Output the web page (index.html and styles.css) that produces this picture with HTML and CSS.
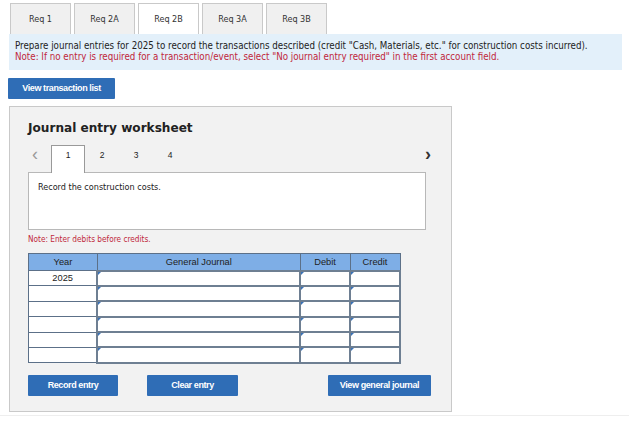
FILE: index.html
```html
<!DOCTYPE html>
<html>
<head>
<meta charset="utf-8">
<link rel="stylesheet" href="styles.css">
</head>
<body>
<div class="tabs">
  <div class="tab">Req 1</div>
  <div class="tab">Req 2A</div>
  <div class="tab active">Req 2B</div>
  <div class="tab">Req 3A</div>
  <div class="tab">Req 3B</div>
</div>
<div class="info">
  <p>Prepare journal entries for 2025 to record the transactions described (credit "Cash, Materials, etc." for construction costs incurred).</p>
  <p class="red">Note: If no entry is required for a transaction/event, select "No journal entry required" in the first account field.</p>
</div>
<div class="btnrow"><span class="btn btn-list">View transaction list</span></div>
<div class="panel">
  <h2 class="title">Journal entry worksheet</h2>
  <div class="pager">
    <span class="arrow left">&lsaquo;</span>
    <span class="page current">1</span>
    <span class="page">2</span>
    <span class="page">3</span>
    <span class="page">4</span>
    <span class="spacer"></span>
    <span class="arrow right">&rsaquo;</span>
  </div>
  <div class="desc">Record the construction costs.</div>
  <div class="note">Note: Enter debits before credits.</div>
  <table class="journal">
    <thead>
      <tr><th class="c-year">Year</th><th class="c-gj">General Journal</th><th class="c-dr">Debit</th><th class="c-cr">Credit</th></tr>
    </thead>
    <tbody>
      <tr><td class="year">2025</td><td class="in"><i></i></td><td class="in"><i></i></td><td class="in"><i></i></td></tr>
      <tr><td class="year"></td><td class="in"><i></i></td><td class="in"><i></i></td><td class="in"><i></i></td></tr>
      <tr><td class="year"></td><td class="in"><i></i></td><td class="in"><i></i></td><td class="in"><i></i></td></tr>
      <tr><td class="year"></td><td class="in"><i></i></td><td class="in"><i></i></td><td class="in"><i></i></td></tr>
      <tr><td class="year"></td><td class="in"><i></i></td><td class="in"><i></i></td><td class="in"><i></i></td></tr>
      <tr><td class="year"></td><td class="in"><i></i></td><td class="in"><i></i></td><td class="in"><i></i></td></tr>
    </tbody>
  </table>
  <div class="actions">
    <span class="btn btn-record">Record entry</span>
    <span class="btn btn-clear">Clear entry</span>
    <span class="btn btn-view">View general journal</span>
  </div>
</div>
<div class="footer-line"></div>
</body>
</html>
```
FILE: styles.css
```css
* { box-sizing: border-box; }
html, body { margin: 0; padding: 0; background: #fff; }
body {
  width: 629px;
  height: 425px;
  overflow: hidden;
  font-family: "DejaVu Sans Condensed", "DejaVu Sans", sans-serif;
  color: #222;
}
.tabs {
  display: flex;
  gap: 3px;
  padding: 3px 0 0 10px;
  height: 34px;
}
.tab {
  width: 61px;
  height: 31px;
  border: 1px solid #c9c9c9;
  border-bottom: none;
  background: #f0f0f0;
  display: flex;
  align-items: center;
  justify-content: center;
  font-size: 9px;
  color: #333;
}
.tab.active { background: #fff; }
.info {
  margin: 0 7px 0 9px;
  background: #e3f0fa;
  padding: 6px 6px 6px 6px;
  height: 36px;
  font-size: 9.7px;
  line-height: 11px;
}
.info p { margin: 0; color: #222; white-space: nowrap; }
.info p.red { color: #c0273a; }
.btnrow { padding: 6px 0 0 8px; height: 29px; }
.btn {
  display: inline-flex;
  align-items: center;
  justify-content: center;
  background: #2f6db6;
  color: #fff;
  font-family: "Liberation Sans", Arial, sans-serif;
  font-weight: bold;
  font-size: 9px;
  letter-spacing: -0.4px;
  border-radius: 1px;
}
.btn-list { width: 107px; height: 21px; }
.panel {
  margin: 7px 0 0 9px;
  width: 443px;
  height: 306px;
  background: #f2f2f2;
  border: 1px solid #c9c9c9;
  padding: 13px 0 0 18px;
}
.title {
  margin: 0;
  font-family: "DejaVu Sans", sans-serif;
  font-weight: bold;
  font-size: 12.1px;
  line-height: 16px;
  color: #222;
}
.pager {
  display: flex;
  align-items: stretch;
  height: 27px;
  margin-top: 9px;
  width: 403px;
  font-family: "Liberation Sans", Arial, sans-serif;
  font-size: 8.5px;
  color: #222;
}
.arrow {
  font-size: 18px;
  line-height: 18px;
  color: #9a9a9a;
  display: flex;
  align-items: flex-start;
  padding-left: 4px;
  width: 23px;
}
.arrow.right { color: #333; width: auto; font-weight: bold; padding-left: 0; }
.page {
  width: 34px;
  display: flex;
  align-items: flex-start;
  justify-content: center;
  padding-top: 5px;
}
.page.current {
  background: #fff;
  border: 1px solid #999;
  border-bottom: none;
  position: relative;
  z-index: 1;
  margin-bottom: -1px;
  padding-top: 4px;
}
.spacer { flex: 1; }
.desc {
  width: 398px;
  height: 58px;
  background: #fff;
  border: 1px solid #b8b8b8;
  padding: 9px 9px;
  font-size: 9px;
  color: #222;
}
.note {
  font-size: 8.2px;
  color: #c0273a;
  margin-top: 4px;
  height: 19px;
}
.journal {
  border-collapse: collapse;
  width: 373px;
  font-family: "Liberation Sans", Arial, sans-serif;
  font-size: 9.3px;
  color: #222;
}
.journal th {
  background: #7eaee6;
  border: 1px solid #5c7088;
  height: 17px;
  font-weight: normal;
  padding: 0;
}
.c-year { width: 69px; }
.c-gj { width: 203px; }
.c-dr { width: 50px; }
.c-cr { width: 50px; }
.journal td {
  height: 15.4px;
  padding: 0;
  background: #fff;
}
.journal td.year {
  border: 1px solid #5c7088;
  text-align: center;
  vertical-align: top;
  line-height: 12px;
  padding-top: 1px;
}
.journal td.in {
  border: 2px solid #6e7f92;
  position: relative;
}
.journal td.in i {
  position: absolute;
  left: 0;
  top: 0;
  width: 0;
  height: 0;
  border-top: 3px solid #3a72b8;
  border-right: 3px solid transparent;
}
.actions {
  display: flex;
  margin-top: 11px;
  width: 404px;
}
.btn-record { width: 90px; height: 21px; }
.btn-clear { width: 91px; height: 21px; margin-left: 29px; }
.btn-view { width: 103px; height: 21px; margin-left: 90px; }
.footer-line {
  margin-top: 3px;
  border-top: 1px solid #eee;
}
```
